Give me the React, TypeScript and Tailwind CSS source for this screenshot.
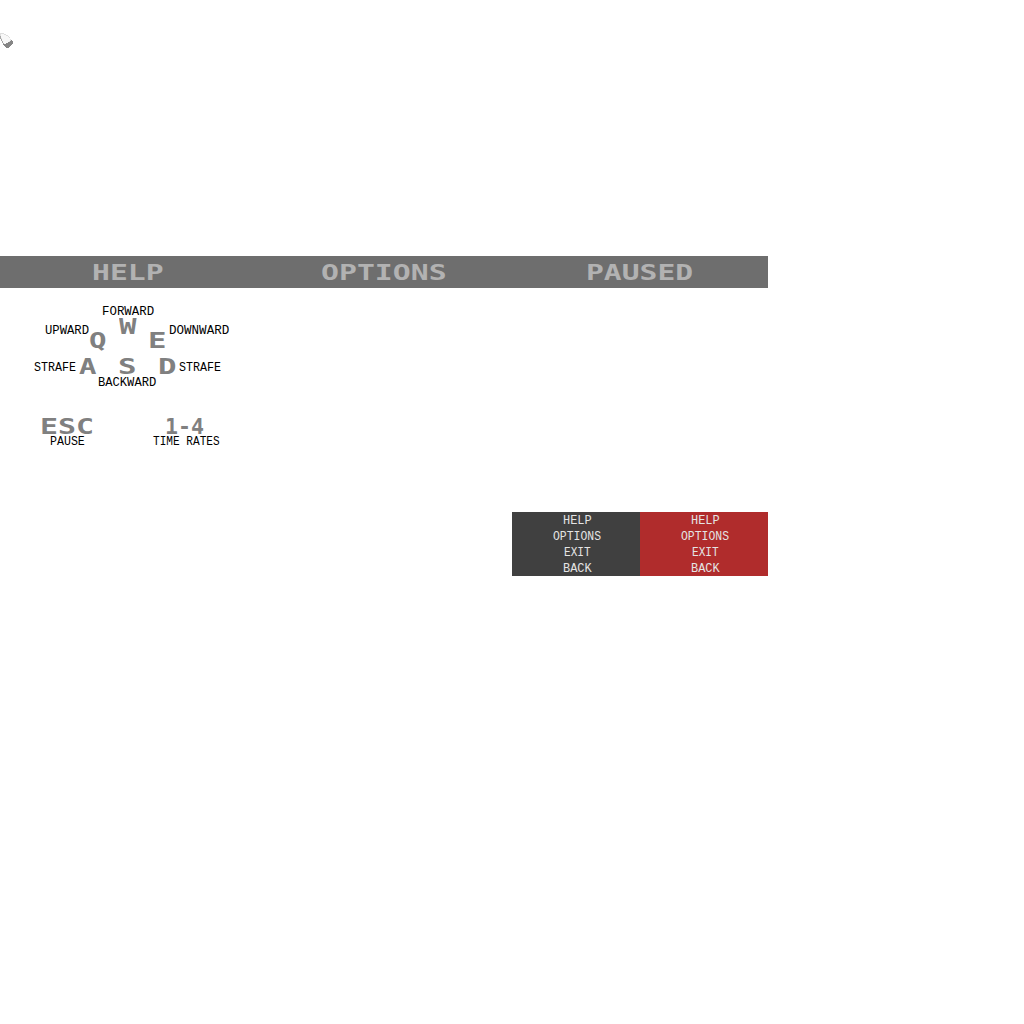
import React from "react";

type WordProps = { text: string; width: number; big?: boolean; className?: string };

/* A word stretched to an exact pixel width. */
function Word({ text, width, big = false, className = "" }: WordProps) {
  const ref = React.useRef<HTMLSpanElement>(null);
  const [scale, setScale] = React.useState(1);
  React.useLayoutEffect(() => {
    if (ref.current) setScale(width / ref.current.offsetWidth);
  }, [width, text]);
  return (
    <span className={`block ${big ? "h-[15px]" : "h-[9px]"} ${className}`} style={{ width }}>
      <span
        ref={ref}
        className={`inline-block origin-left whitespace-nowrap align-top ${
          big
            ? "font-['DejaVu_Sans_Mono',monospace] text-[20.5px] leading-[15px] font-bold"
            : "font-['Liberation_Mono',monospace] text-[13.6px] leading-[9px]"
        }`}
        style={{ transform: `scaleX(${scale})` }}
      >
        {text}
      </span>
    </span>
  );
}

function Placed({ x, y, ...word }: WordProps & { x: number; y: number }) {
  return (
    <div className="absolute" style={{ left: x, top: y }}>
      <Word {...word} />
    </div>
  );
}

const keys = [
  { text: "W", x: 119, y: 32, width: 17 },
  { text: "Q", x: 89, y: 46, width: 17 },
  { text: "E", x: 148, y: 46, width: 18 },
  { text: "A", x: 79, y: 72, width: 17 },
  { text: "S", x: 118, y: 72, width: 18 },
  { text: "D", x: 158, y: 72, width: 18 },
  { text: "ESC", x: 40, y: 132, width: 54 },
  { text: "1-4", x: 165, y: 132, width: 39 },
];

const labels = [
  { text: "FORWARD", x: 102, y: 19, width: 52 },
  { text: "UPWARD", x: 45, y: 38, width: 44 },
  { text: "DOWNWARD", x: 169, y: 38, width: 60 },
  { text: "STRAFE", x: 34, y: 75, width: 42 },
  { text: "STRAFE", x: 179, y: 75, width: 42 },
  { text: "BACKWARD", x: 98, y: 90, width: 58 },
  { text: "PAUSE", x: 50, y: 149, width: 35 },
  { text: "TIME RATES", x: 153, y: 149, width: 67 },
];

const menu = [
  { text: "HELP", width: 29 },
  { text: "OPTIONS", width: 48 },
  { text: "EXIT", width: 27 },
  { text: "BACK", width: 29 },
];

function Menu({ className }: { className: string }) {
  return (
    <div className={`w-32 ${className}`}>
      {menu.map((m) => (
        <div key={m.text} className="flex h-4 justify-center pt-1 pl-0.5">
          <Word {...m} className="text-[#e4e4e4]" />
        </div>
      ))}
    </div>
  );
}

function Title({ text, width }: { text: string; width: number }) {
  return (
    <div className="flex w-64 justify-center pt-[10px] pr-px">
      <Word big text={text} width={width} className="text-[#b2b2b2]" />
    </div>
  );
}

export default function App() {
  return (
    <main className="h-[1024px] w-[1024px] overflow-hidden bg-white">
      <div className="h-64 pt-8">
        <svg width="16" height="18" viewBox="0 0 16 18" shapeRendering="crispEdges">
          <path d="M0 1h4v1h2v1h2v1h1v1h1v2h1v1h1v1h1v3h-1v1h-1v1h-1v1H9v1H6v-1H5v-1H4v-2H3v-2H2V9H1V6H0z" fill="#dedede" />
          <path d="M1 2h3v1h2v1h2v1h1v1h1v3H9v1H8v1H6v1H4v-1H3V9H2V6H1z" fill="#f8f8f8" />
          <path d="M11 8h1v1h1v3h-1v1h-1v1h-1v1H9v1H6v-1H5v-1H4v-1H3v-2h1v1h2v-1h2v-1h2V9h1z" fill="#858585" />
          <path d="M0 4h1v3h1v2h1v2h1v1H3v-1H2V9H1V7H0z" fill="#a6a6a6" />
        </svg>
      </div>
      <header className="flex h-8 w-[768px] bg-[#6e6e6e]">
        <Title text="HELP" width={71} />
        <Title text="OPTIONS" width={125} />
        <Title text="PAUSED" width={107} />
      </header>
      <section className="relative h-56 w-64">
        {keys.map((k) => (
          <Placed key={k.text} big className="text-[#808080]" {...k} />
        ))}
        {labels.map((l) => (
          <Placed key={l.text + l.x} className="text-black" {...l} />
        ))}
      </section>
      <div className="flex pl-[512px]">
        <Menu className="bg-[#404040]" />
        <Menu className="bg-[#b02c2c]" />
      </div>
    </main>
  );
}
